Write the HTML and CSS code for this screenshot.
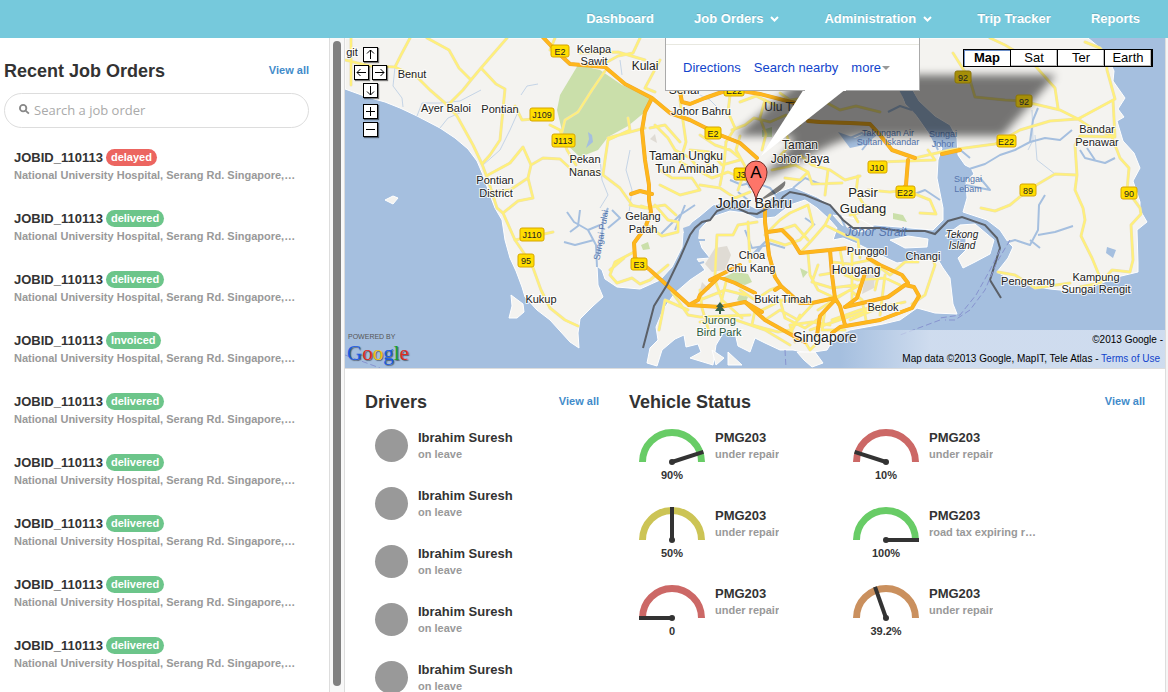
FILE: index.html
```html
<!DOCTYPE html>
<html lang="en">
<head>
<meta charset="utf-8">
<meta name="viewport" content="width=device-width, initial-scale=1">
<title>Dashboard</title>
<link rel="stylesheet" href="styles.css">
</head>
<body>
<header class="topbar">
  <nav class="nav" aria-label="Main">
    <a href="#">Dashboard</a>
    <a href="#" class="has-menu">Job Orders <svg class="chevron" viewBox="0 0 9 6" aria-hidden="true"><path d="M1 1l3.500 3.500L8 1"/></svg></a>
    <a href="#" class="has-menu">Administration <svg class="chevron" viewBox="0 0 9 6" aria-hidden="true"><path d="M1 1l3.500 3.500L8 1"/></svg></a>
    <a href="#">Trip Tracker</a>
    <a href="#">Reports</a>
  </nav>
</header>

<div class="shell">
  <aside class="sidebar">
    <div class="section-head">
      <h2>Recent Job Orders</h2>
      <a href="#">View all</a>
    </div>
    <label class="search">
      <svg viewBox="0 0 12 12" aria-hidden="true"><circle cx="4.500" cy="4.500" r="3.500"/><path d="M7.200 7.200l3.600 3.300"/></svg>
      <input type="text" placeholder="Search a job order" aria-label="Search a job order">
    </label>
    <ul class="jobs">
      <li><h3>JOBID_110113 <span class="badge delayed">delayed</span></h3><p>National University Hospital, Serang Rd. Singapore,…</p></li>
      <li><h3>JOBID_110113 <span class="badge">delivered</span></h3><p>National University Hospital, Serang Rd. Singapore,…</p></li>
      <li><h3>JOBID_110113 <span class="badge">delivered</span></h3><p>National University Hospital, Serang Rd. Singapore,…</p></li>
      <li><h3>JOBID_110113 <span class="badge">Invoiced</span></h3><p>National University Hospital, Serang Rd. Singapore,…</p></li>
      <li><h3>JOBID_110113 <span class="badge">delivered</span></h3><p>National University Hospital, Serang Rd. Singapore,…</p></li>
      <li><h3>JOBID_110113 <span class="badge">delivered</span></h3><p>National University Hospital, Serang Rd. Singapore,…</p></li>
      <li><h3>JOBID_110113 <span class="badge">delivered</span></h3><p>National University Hospital, Serang Rd. Singapore,…</p></li>
      <li><h3>JOBID_110113 <span class="badge">delivered</span></h3><p>National University Hospital, Serang Rd. Singapore,…</p></li>
      <li><h3>JOBID_110113 <span class="badge">delivered</span></h3><p>National University Hospital, Serang Rd. Singapore,…</p></li>
    </ul>
  </aside>
  <div class="scroll-track" aria-hidden="true"><div class="scroll-thumb"></div></div>

  <main class="main">
    <section class="map" aria-label="Map">
      <svg class="map-canvas" viewBox="345 38 820 330" preserveAspectRatio="xMidYMid slice">
        <defs>
          <filter id="soft" x="-20%" y="-40%" width="140%" height="180%"><feGaussianBlur stdDeviation="4"/></filter>
          <g id="minor">
            <path d="M345 60L370 66L395 67L401 55L410 38M351 38V85M395 67L418 78L430 90L445 103L457 116L473 145L482 164L488 180L497 208L503 213L515 240L532 265L541 290L550 308L565 320L578 326"/>
            <path d="M427 38L449 50L459 68L471 80L481 68L507 38M471 80L463 90L450 103M481 68L496 84L505 89L500 140L490 155L482 164M515 106L522 120L545 118"/>
            <path d="M488 175L510 163L523 147L531 165L528 178L510 190L490 192M531 165L543 158L560 159L572 170L600 172M528 178L533 198L518 201L503 213M515 240L535 236L553 232"/>
            <path d="M550 125L560 130L567 150L576 165M605 71L592 90L578 112L565 120L562 132M600 66L618 56L633 53L640 38M580 53L618 52L645 60M660 60L645 88L655 92M605 160L608 140L630 130L628 118M605 160L603 175L620 188L632 205M608 138L645 128"/>
            <path d="M550 50L555 38M686 85L680 100L686 142L680 162L695 170M730 95L728 112L735 128L726 142M655 125L668 138L675 150L690 158L700 170M650 128L665 125L680 142M660 185L680 195L700 190L692 178L672 178L660 170M655 205L668 220L678 222L678 232L662 236L648 226M630 205L645 208L665 205L676 215"/>
            <path d="M740 102L756 96L775 105M732 130L745 125L754 118L770 122L786 115L800 125M780 93L790 100L805 98M700 135L715 145L730 150L740 158M690 150L710 152L722 165L740 160M693 168L712 178L728 172L746 180M710 155L706 172M726 142L724 165L720 185M740 136L736 150L746 168L738 190M700 185L720 188L735 198L750 192M765 100L760 118L766 134L762 150M785 130L790 145L778 158L790 164M772 170L795 165L808 172L800 180L785 178M800 155L812 165L830 170L845 180L860 176M808 172L812 184L842 183M828 170L825 195M818 98L840 110L856 106L880 112"/>
            <path d="M858 176L856 192L864 205L876 210M868 190L890 192L905 190L930 200L936 214L920 213M850 215L870 210L885 214M850 208L858 222"/>
            <path d="M880 162L935 160L928 150M953 53L970 80L975 97L1005 100L1022 101L1060 110L1078 119L1115 99L1107 70L1106 58M990 38L1005 45L1030 60L1055 88L1058 108M1085 42L1100 48L1108 58M1078 119L1090 127L1115 137L1113 100M915 158L950 150L995 144L1020 130L1050 121L1078 119"/>
            <path d="M1112 137L1120 158L1129 168L1127 190L1140 208L1141 214L1131 225L1133 260L1130 272L1112 270L1100 283L1080 287M1113 137L1080 136L1075 145L1077 175L1075 190L1083 208L1085 220L1081 236L1092 258L1099 275M1077 175L1055 174L1028 190L1010 205L995 211L981 208M998 272L1015 275L1035 288L1070 283"/>
            <path d="M634 252L615 262L610 275L617 283L632 278L640 284L650 280L668 265M624 258L610 270M651 209L641 206M688 310L665 300L659 330M672 292L688 315L700 317L750 315M715 276L717 235L733 235L738 225L757 222M748 222L750 262"/>
            <path d="M765 235L780 220L790 213L808 205L813 225L800 240L785 245L770 240M780 230L795 225L808 240M800 253L812 240L825 225L845 235L858 240L860 258M808 253L810 275L818 290L835 298M832 262L850 264L870 260L890 275L905 262L918 262M840 250L845 275L858 280L885 278L900 285M852 252L852 300M818 265L812 282L832 288L855 285M880 268L875 290M818 310L850 290L862 300M850 320L878 308L905 302M835 298L860 285M885 275L880 315M862 300L866 320M912 304L925 295L935 265L932 258M820 275L838 272M825 225L830 215"/>
            <path d="M700 290L702 308L710 335M715 280L722 300L742 318M726 282L720 307M740 290L755 300L770 290L781 286M700 300L725 290L745 295M745 302L758 312L782 300L800 303M755 310L752 325L778 332L790 330M765 320L780 310L798 320L812 305M780 300L785 318L805 328L820 318M790 334L800 315M795 342L790 325L812 322L830 325M805 342L810 350L820 340M825 310L822 330L845 330M810 330L845 318L870 310M832 320L860 310L885 305M700 322L730 318L765 330L790 345"/>
          </g>
          <g id="major">
            <path d="M540 34L555 50L570 64L605 67L625 84L652 98L670 113L690 120L720 135L740 143L757 158M652 98L645 112L642 130L645 160L649 185L649 200L651 212L645 228L634 243L635 258L650 270L670 288L689 305L720 307L745 302L762 312M631 194L640 191L652 194"/>
            <path d="M680 92L682 102L690 104L705 98L725 91M725 88L760 94L795 103M808 121L820 122L850 123L870 124L880 135L892 150L915 158M942 154L960 150M908 160L906 185L900 195"/>
            <path d="M765 205L765 222L769 255L775 277L781 286L800 303L812 303L835 298L840 306L845 325M768 232L782 230L792 240L800 253L830 250L832 275L835 298M830 250L848 248M845 307L888 297L905 285L914 287L919 296L912 308L880 320L840 327L832 333M868 258L880 265L902 275L908 283M866 270L857 298L845 307M835 300L820 316L817 335M775 290L781 286M689 305L698 300L700 295L719 277L735 283L755 293M745 302L765 320L790 334L805 342M710 280L740 265"/>
          </g>
        </defs>

        <rect x="345" y="38" width="820" height="330" fill="#a5bfdf"/>
        <g class="land">
          <path d="M345 38V89L367 97L385 102L400 108L417 116L440 128L455 138L468 149L477 161L483 175L490 195L495 208L502 220L505 240L510 258L516 271L522 287L525 297L537 310L550 320L570 342L579 348L578 333L580 319L593 306L603 297L598 285L597 266L602 270L605 279L617 287L640 289L660 280L672 267L682 247L683 233L692 222L700 216L713 205L730 200L745 203L757 209L767 202L778 192L793 187L805 192L817 197L830 205L840 216L853 228L875 225L910 228L933 230L943 220L943 208L937 178L938 160L942 148L927 131L913 111L905 104L900 88L910 85L918 100L935 116L950 125L957 138L958 155L965 165L971 168L974 174L966 181L967 198L963 212L987 220L1000 230L1008 242L1013 247L1008 258L997 272L1012 280L1027 285L1050 289L1080 292L1097 285L1117 277L1138 272V263L1137 230L1147 222L1140 210V202L1133 181L1140 168L1134 153L1123 141L1117 121L1124 117L1118 109L1125 98L1113 81L1114 71L1105 52L1088 38Z"/>
          <path d="M712 217L730 211L745 213L757 219L775 217L790 205L805 200L817 208L830 220L837 228L833 240L843 238L860 245L880 255L897 263L917 260L937 258L943 268L950 278L953 304L957 314L935 313L917 308L900 320L883 324L850 330L835 337L827 350L807 353L793 350L780 350L765 343L755 338L750 352L738 346L735 333L725 330L716 345L713 365L690 358L701 352L698 344L686 347L684 335L675 339L662 350L657 366L647 363L650 348L658 340L656 327L663 310L675 293L690 280L705 270L697 259L710 258L702 248L697 233L704 225Z"/>
          <path d="M511 295L523 304L524 312L517 318H509L512 306ZM385 200L393 196L398 198L393 204ZM797 352L815 352L823 363L812 367L804 360ZM712 350L724 358L716 365ZM728 352L742 365H728ZM963 268L958 258L966 250L966 235L945 236L960 225L975 224L994 240L990 254L975 262ZM890 240L908 236L928 239L927 247L905 248ZM833 215L862 220L875 228L860 232L842 225Z"/>
        </g>
        <g class="green">
          <path d="M578 65L600 70L622 85L652 98L645 112L628 126L608 137L598 150L580 157L565 143L557 110L560 95Z"/>
          <path d="M641 245L648 242L650 249L643 250ZM722 278L735 272L748 274L752 282L745 285L733 282ZM762 130L772 127V137H762ZM800 268L808 272L803 278ZM740 293L748 297L745 304L737 300ZM893 213L903 215L907 222L893 219Z"/>
        </g>
        <path class="built" d="M715 248L727 246L731 255L725 270L712 272L705 264ZM866 270L875 273L874 288L862 294ZM650 139L655 134L657 143ZM702 282L710 290L700 290Z"/>
        <g class="creek">
          <path d="M395 67L393 86L402 98L403 107M417 116L422 103L440 103L460 101L481 90M440 128L448 118L462 112M483 165L500 150L510 130L518 112M521 95L527 86L538 84M600 158L602 180L608 195L600 208M630 150L626 170L632 190L628 220M620 60L622 75M690 90L710 100L725 115M1035 135L1037 160L1055 174M1032 110L1033 140L1028 150"/>
        </g>
        <g class="river">
          <path d="M597 267L596 245L588 230L574 222L567 212M598 255L602 235L603 220L608 208M588 230L600 225M594 240L575 245L564 242M612 210L620 218L608 228M570 232L578 226L580 210M660 235L670 225L680 215L695 205M675 230L685 205M780 200L770 188L754 182L742 185L730 180M750 188L745 178M748 200L738 192M793 188L805 178L820 184M745 230L752 248L770 245M750 257L765 242L785 248M765 242L758 252M690 240L705 240M693 265L704 262M805 218L815 225M780 286L790 292M840 215L850 238L870 245L878 255M905 100L920 110L938 150M850 138L862 133L870 140L862 150M888 112L900 106L912 110M958 148L970 158M940 200L925 190L912 195"/>
          <path d="M966 170L985 164L1000 155L1015 150L1030 142L1045 138L1060 140L1072 130M1030 142L1033 120L1038 108M966 185L990 190L980 178M998 245L1015 240L1030 245L1038 230L1039 205L1045 195M1038 235L1055 232L1073 226M1030 240L1040 248M1080 150L1085 158L1105 163L1115 158M1087 148L1095 160"/>
        </g>
        <path class="lake" d="M588 132L592 135L593 142L586 148L589 139ZM898 88L912 90L925 112L945 135L936 145L921 120L907 105ZM1107 247L1116 250L1113 258L1106 253ZM838 132L855 138L868 132L876 136L864 145L850 148ZM683 228L700 222L698 240L686 243Z"/>
        <use href="#minor" class="minor-edge"/><use href="#minor" class="minor-fill"/>
        <use href="#major" class="major-edge"/><use href="#major" class="major-fill"/>
        <path class="border-line" d="M643 348L654 306L667 285L680 258L690 235L695 228L702 222L710 220L717 211L725 208H737L748 213L757 214L768 208L778 204L783 197L790 192L805 195L830 205L843 220L853 228L880 228L900 231L925 231L935 234L948 221L962 217L985 225L997 238L1000 248L990 280L1001 298"/>
        <path class="ferry" d="M345 355L380 368M1010 240L997 262L985 290L970 310L955 320L945 320M1000 250L990 270L976 295L960 315L940 318M940 320L900 335M785 350L786 368"/>

        <g class="water-labels">
          <text x="888" y="136">Takungan Air</text><text x="888" y="145">Sultan Iskandar</text>
          <text x="943" y="137">Sungai</text><text x="943" y="147">Johor</text>
          <text x="968" y="182">Sungai</text><text x="968" y="192">Lebam</text>
          <text x="601" y="238" transform="rotate(-80 601 235)">Sungai Pulai</text>
          <text x="876" y="236" class="strait">Johor Strait</text>
        </g>

        <path d="M806 75H1056L1002 136H862C820 142 800 168 757 180C780 160 800 140 790 136H735Z" opacity=".52" filter="url(#soft)"/>
        <path d="M757 202L785 181C788 190 770 196 757 202Z" opacity=".5"/>

        <g class="shields">
          <g><rect x="551" y="45" width="18" height="12"/><text x="560" y="55">E2</text></g>
          <g><rect x="530" y="108" width="24" height="13"/><text x="542" y="118">J109</text></g>
          <g><rect x="552" y="134" width="23" height="13"/><text x="563" y="144">J113</text></g>
          <g><rect x="705" y="127" width="16" height="12"/><text x="713" y="137">E2</text></g>
          <g><rect x="724" y="84" width="20" height="12"/><text x="734" y="94">E22</text></g>
          <g><rect x="734" y="168" width="20" height="12"/><text x="741" y="178">J3</text></g>
          <g><rect x="868" y="161" width="19" height="12"/><text x="877" y="171">J10</text></g>
          <g><rect x="896" y="186" width="19" height="12"/><text x="905" y="196">E22</text></g>
          <g><rect x="520" y="228" width="24" height="13"/><text x="532" y="238">J110</text></g>
          <g><rect x="518" y="254" width="16" height="13"/><text x="526" y="264">95</text></g>
          <g><rect x="631" y="258" width="16" height="12"/><text x="639" y="268">E3</text></g>
          <g class="shade"><rect x="955" y="71" width="16" height="12"/><text x="963" y="81">92</text></g>
          <g class="shade"><rect x="1016" y="95" width="16" height="12"/><text x="1024" y="105">92</text></g>
          <g><rect x="997" y="135" width="19" height="12"/><text x="1006" y="145">E22</text></g>
          <g><rect x="1020" y="184" width="16" height="12"/><text x="1028" y="194">89</text></g>
          <g><rect x="1121" y="187" width="16" height="12"/><text x="1129" y="197">90</text></g>
        </g>

        <g class="labels">
          <text x="352" y="56">git</text><text x="412" y="78">Benut</text>
          <text x="446" y="112">Ayer Baloi</text><text x="500" y="113">Pontian</text>
          <text x="495" y="184">Pontian</text><text x="496" y="197">District</text>
          <text x="594" y="53">Kelapa</text><text x="594" y="65">Sawit</text>
          <text x="645" y="70" class="town">Kulai</text><text x="684" y="94" class="town">Senai</text>
          <text x="701" y="115">Johor Bahru</text>
          <text x="585" y="163">Pekan</text><text x="585" y="176">Nanas</text>
          <text x="686" y="160" class="town">Taman Ungku</text><text x="687" y="173" class="town">Tun Aminah</text>
          <g class="shaded"><text x="790" y="111" class="town">Ulu Tiram</text></g>
          <text x="800" y="149" class="town">Taman</text><text x="800" y="163" class="town">Johor Jaya</text>
          <text x="754" y="208" class="city">Johor Bahru</text>
          <text x="863" y="197" class="big">Pasir</text><text x="863" y="213" class="big">Gudang</text>
          <text x="643" y="220">Gelang</text><text x="643" y="233">Patah</text>
          <text x="541" y="303">Kukup</text>
          <text x="752" y="259">Choa</text><text x="751" y="272">Chu Kang</text>
          <text x="867" y="255">Punggol</text><text x="923" y="260">Changi</text>
          <text x="856" y="274" class="town">Hougang</text>
          <text x="783" y="303">Bukit Timah</text><text x="883" y="311">Bedok</text>
          <text x="825" y="342" class="city">Singapore</text>
          <text x="719" y="324" class="park">Jurong</text><text x="719" y="336" class="park">Bird Park</text>
          <text x="1097" y="133">Bandar</text><text x="1097" y="146">Penawar</text>
          <text x="1028" y="285">Pengerang</text>
          <text x="1096" y="281">Kampung</text><text x="1096" y="293">Sungai Rengit</text>
          <text x="962" y="238" class="isle">Tekong</text><text x="962" y="249" class="isle">Island</text>
        </g>
        <path d="M720 302L724 307H722L725 311H721V314H719V311H715L718 307H716Z" fill="#38624a"/>

        <path class="bubble-tail" d="M804 89L761 156L846 89Z"/>
        <path class="marker" d="M756 202C756 190 745 184 745 172A11 11 0 0 1 767 172C767 184 756 190 756 202Z"/>
        <text class="marker-letter" x="756" y="178">A</text>
      </svg>

      <div class="info-window">
        <a href="#">Directions</a><a href="#">Search nearby</a><a href="#" class="more">more</a>
      </div>

      <div class="pan">
        <button type="button" class="n" aria-label="Pan up"><svg viewBox="0 0 13 13"><path d="M6.500 11V2M3 5.500L6.500 2L10 5.500"/></svg></button>
        <button type="button" class="w" aria-label="Pan left"><svg viewBox="0 0 13 13"><path d="M11 6.500H2M5.500 3L2 6.500L5.500 10"/></svg></button>
        <button type="button" class="e" aria-label="Pan right"><svg viewBox="0 0 13 13"><path d="M2 6.500H11M7.500 3L11 6.500L7.500 10"/></svg></button>
        <button type="button" class="s" aria-label="Pan down"><svg viewBox="0 0 13 13"><path d="M6.500 2V11M3 7.500L6.500 11L10 7.500"/></svg></button>
        <button type="button" class="in" aria-label="Zoom in"><svg viewBox="0 0 13 13"><path d="M2 6.500H11M6.500 2V11"/></svg></button>
        <button type="button" class="out" aria-label="Zoom out"><svg viewBox="0 0 13 13"><path d="M2 6.500H11"/></svg></button>
      </div>

      <div class="map-types">
        <button type="button" class="active">Map</button><button type="button">Sat</button><button type="button">Ter</button><button type="button">Earth</button>
      </div>

      <div class="google">
        <span class="powered">POWERED BY</span>
        <span class="wordmark"><span class="b">G</span><span class="r">o</span><span class="y">o</span><span class="b">g</span><span class="g">l</span><span class="r">e</span></span>
      </div>
      <div class="credits"><p>©2013 Google -</p><p>Map data ©2013 Google, MapIT, Tele Atlas - <a href="#">Terms of Use</a></p></div>
    </section>

    <div class="panels">
      <section class="drivers">
        <div class="section-head"><h2>Drivers</h2><a href="#">View all</a></div>
        <ul>
          <li><span class="avatar"></span><div><h3>Ibrahim Suresh</h3><p>on leave</p></div></li>
          <li><span class="avatar"></span><div><h3>Ibrahim Suresh</h3><p>on leave</p></div></li>
          <li><span class="avatar"></span><div><h3>Ibrahim Suresh</h3><p>on leave</p></div></li>
          <li><span class="avatar"></span><div><h3>Ibrahim Suresh</h3><p>on leave</p></div></li>
          <li><span class="avatar"></span><div><h3>Ibrahim Suresh</h3><p>on leave</p></div></li>
        </ul>
      </section>
      <section class="vehicles">
        <div class="section-head"><h2>Vehicle Status</h2><a href="#">View all</a></div>
        <ul>
          <li><figure class="gauge green-arc"><svg viewBox="0 0 66 36"><path class="arc" d="M3.500 33A29.500 29.500 0 0 1 62.500 33"/><path class="needle" d="M33 33L64.400 22.800"/><circle cx="33" cy="33" r="3"/></svg><figcaption>90%</figcaption></figure><div><h3>PMG203</h3><p>under repair</p></div></li>
          <li><figure class="gauge red-arc"><svg viewBox="0 0 66 36"><path class="arc" d="M3.500 33A29.500 29.500 0 0 1 62.500 33"/><path class="needle" d="M33 33L1.600 22.800"/><circle cx="33" cy="33" r="3"/></svg><figcaption>10%</figcaption></figure><div><h3>PMG203</h3><p>under repair</p></div></li>
          <li><figure class="gauge yellow-arc"><svg viewBox="0 0 66 36"><path class="arc" d="M3.500 33A29.500 29.500 0 0 1 62.500 33"/><path class="needle" d="M33 33V0"/><circle cx="33" cy="33" r="3"/></svg><figcaption>50%</figcaption></figure><div><h3>PMG203</h3><p>under repair</p></div></li>
          <li><figure class="gauge green-arc"><svg viewBox="0 0 66 36"><path class="arc" d="M3.500 33A29.500 29.500 0 0 1 62.500 33"/><path class="needle" d="M33 33H66"/><circle cx="33" cy="33" r="3"/></svg><figcaption>100%</figcaption></figure><div><h3>PMG203</h3><p>road tax expiring r…</p></div></li>
          <li><figure class="gauge red-arc"><svg viewBox="0 0 66 36"><path class="arc" d="M3.500 33A29.500 29.500 0 0 1 62.500 33"/><path class="needle" d="M33 33H0"/><circle cx="33" cy="33" r="3"/></svg><figcaption>0</figcaption></figure><div><h3>PMG203</h3><p>under repair</p></div></li>
          <li><figure class="gauge orange-arc"><svg viewBox="0 0 66 36"><path class="arc" d="M3.500 33A29.500 29.500 0 0 1 62.500 33"/><path class="needle" d="M33 33L22 1.900"/><circle cx="33" cy="33" r="3"/></svg><figcaption>39.2%</figcaption></figure><div><h3>PMG203</h3><p>under repair</p></div></li>
        </ul>
      </section>
    </div>
  </main>
</div>
</body>
</html>
```
FILE: styles.css
```css
* { box-sizing: border-box; }
body { margin: 0; height: 100vh; display: flex; flex-direction: column; overflow: hidden; background: #fff; color: #333; font-family: "Liberation Sans", Arial, sans-serif; font-size: 11px; font-weight: bold; }
h2, h3, p, ul, figure { margin: 0; padding: 0; }
ul { list-style: none; }
a { color: #428bca; text-decoration: none; }
h2 { font-size: 18px; line-height: 24px; }
h3 { font-size: 13px; line-height: 17px; }
p { color: #999; font-size: 11px; line-height: 16px; }

.topbar { flex: none; background: #76c9dc; }
.nav { display: flex; justify-content: flex-end; gap: 40px; padding: 0 28px; }
.nav a { color: #fff; font-size: 13px; line-height: 38px; text-shadow: 0 -1px 0 rgba(0, 0, 0, .15); }
.has-menu { display: flex; align-items: center; gap: 7px; padding-right: 5px; }
.chevron { width: 9px; height: 6px; fill: none; stroke: #fff; stroke-width: 2; }

.shell { flex: 1; min-height: 0; display: flex; }
.sidebar { flex: none; width: 329px; padding: 20px 20px 0 4px; overflow-y: auto; scrollbar-width: none; }
.section-head { display: flex; align-items: center; justify-content: space-between; }
.section-head h2 { padding-top: 2px; line-height: 22px; }
.search { display: flex; align-items: center; gap: 4px; height: 35px; margin-top: 11px; padding: 0 14px 2px; border: 1px solid #ddd; border-radius: 18px; }
.search svg { flex: none; width: 11px; height: 11px; fill: none; stroke: #888; stroke-width: 2; }
.search input { flex: 1; min-width: 0; padding: 0; border: 0; outline: 0; background: none; color: #333; font: 13px "Open Sans", "Noto Sans", sans-serif; }
.search input::placeholder { color: #aaa; opacity: 1; }
.jobs { display: grid; grid-template-columns: minmax(0, 1fr); gap: 24px; padding: 19px 10px; }
.jobs h3 { display: flex; align-items: center; gap: 3px; height: 20px; }
.jobs p { line-height: 17px; overflow: hidden; text-overflow: ellipsis; white-space: nowrap; }
.badge { padding: 0 5px; border-radius: 9px; background: #6cc58a; color: #fff; font-size: 11px; line-height: 17px; }
.badge.delayed { background: #ec6560; }

.scroll-track { flex: none; width: 16px; padding: 3px 3px 6px; border-left: 1px solid #ddd; border-right: 1px solid #ddd; background: #f8f8f8; }
.scroll-thumb { width: 8px; height: 100%; border-radius: 4px; background: #808080; }

.main { flex: 1; min-width: 0; margin-right: 3px; overflow-y: auto; scrollbar-width: none; box-shadow: 1px 0 0 #ddd, 3px 0 0 #f5f5f5; }
.map { position: relative; height: 331px; overflow: hidden; border-bottom: 1px solid #ddd; font-weight: normal; }
.map-canvas { display: block; width: 100%; height: 100%; font-family: "Liberation Sans", Arial, sans-serif; }
.land path { fill: #f4f3f0; stroke: #fff; stroke-width: 1; }
.green path { fill: #cadfaa; }
.built { fill: #dfdbd4; }
.creek path, .river path { fill: none; stroke: #a5bfdf; stroke-linejoin: round; }
.creek path { stroke-width: 1; opacity: .6; }
.river path { stroke-width: 2; }
.lake { fill: #a5bfdf; }
.minor-edge, .minor-fill, .major-edge, .major-fill { fill: none; stroke-linejoin: round; stroke-linecap: round; }
.minor-edge { stroke: #ebe0b4; stroke-width: 3; }
.minor-fill { stroke: #fff07a; stroke-width: 2; }
.major-edge { stroke: #eda92c; stroke-width: 4; }
.major-fill { stroke: #ffb71c; stroke-width: 3; }
.border-line { fill: none; stroke: #5b6068; stroke-width: 2; }
.ferry { fill: none; stroke: #8793cf; stroke-width: 1; stroke-dasharray: 6 3; }
.shields rect { fill: #fd0; stroke: #d6a500; rx: 2px; }
.shields .shade rect { fill: #a58e08; stroke: #8a7408; }
.shields text { font-size: 9px; text-anchor: middle; fill: #222; }
.labels text { font-size: 11px; text-anchor: middle; fill: #222; stroke: #fff; stroke-width: 2px; stroke-opacity: .8; paint-order: stroke; }
.labels .shaded text { stroke: none; }
.labels .town { font-size: 12px; }
.labels .big { font-size: 13px; }
.labels .city { font-size: 14px; }
.labels .park { fill: #2c5a3c; }
.labels .isle { font-size: 10px; font-style: italic; }
.water-labels text { font-size: 9px; text-anchor: middle; fill: #5575ad; }
.water-labels .strait { font-size: 12px; font-style: italic; }
.bubble-tail { fill: #fff; }
.marker { fill: #fe7569; stroke: #6b2a26; stroke-width: 1; }
.marker-letter { font-size: 17px; text-anchor: middle; fill: #000; }

.info-window { position: absolute; top: 0; left: calc(50% - 90px); width: 255px; height: 53px; padding: 16px 17px 0; display: flex; gap: 13px; border: 1px solid #aaa; border-top: 0; background: linear-gradient(#e8e8e0, #e8e8e0) 0 6px / 100% 1px no-repeat #fff; font-size: 13px; line-height: 28px; white-space: nowrap; }
.info-window::after { content: ""; position: absolute; left: 139px; bottom: -1px; width: 41px; height: 1px; background: #fff; }
.info-window a { color: #1144cc; }
.more::after { content: ""; display: inline-block; margin-left: 1px; vertical-align: 2px; border: 4px solid transparent; border-top-color: #999; border-bottom: 0; }

.pan { position: absolute; top: 9px; left: 9px; display: grid; grid-template: repeat(5, 15px) / repeat(4, 7px); gap: 3px 2px; }
.pan button { width: 15px; height: 15px; padding: 0; border: 1px solid #000; background: #fff; box-shadow: 1px 1px 1px rgba(0, 0, 0, .5); }
.pan svg { display: block; width: 13px; height: 13px; fill: none; stroke: #000; stroke-width: 1; }
.n, .s, .in, .out { grid-column: 2 / span 2; }
.n { grid-row: 1; }
.w { grid-area: 2 / 1 / auto / span 2; }
.e { grid-area: 2 / 3 / auto / span 2; }
.s { grid-row: 3; }
.in { grid-row: 4; margin-top: 3px; }
.out { grid-row: 5; margin-top: 3px; }

.map-types { position: absolute; top: 11px; right: 12px; display: flex; border: 1px solid #000; background: #000; }
.map-types button { width: 47px; height: 16px; padding: 0; border: 0; border-right: 1px solid #000; background: #fff; box-shadow: inset -1px -1px 0 #bbb; color: #000; font: 13px/16px "Liberation Sans", Arial, sans-serif; }
.map-types .active { box-shadow: inset 1px 1px 0 #6c8fc8; font-weight: bold; }

.google { position: absolute; left: 2px; bottom: 4px; display: flex; flex-direction: column; }
.powered { padding-left: 1px; color: #555; font-size: 7px; line-height: 10px; }
.wordmark { font: 22px/22px "Liberation Serif", "Times New Roman", serif; text-shadow: 1px 1px 1px rgba(0, 0, 0, .5); }
.wordmark span { font-size: 21px; }
.b { color: #1a5ae0; }
.r { color: #dd2c1e; }
.y { color: #efc010; }
.g { color: #1ba02c; }
.credits { position: absolute; right: 0; bottom: 0; padding: 0 5px 0 62px; background: linear-gradient(90deg, rgba(211, 223, 240, 0), rgba(211, 223, 240, .9) 90px); text-align: right; }
.credits p { color: #000; font-size: 10px; line-height: 19px; }
.credits p:first-child { margin-right: -3px; }
.credits a { color: #1144cc; }

.panels { display: flex; gap: 30px; padding: 20px; }
.drivers { flex: 0 0 30%; }
.vehicles { flex: 1; min-width: 0; }
.panels ul { padding: 16px 10px 0; }
.drivers ul { display: grid; gap: 25px; }
.drivers li { display: flex; gap: 10px; }
.avatar { flex: none; width: 33px; height: 33px; border-radius: 50%; background: #999; }
.vehicles ul { display: grid; grid-template-columns: repeat(auto-fill, 214px); gap: 23px 0; padding-right: 0; }
.vehicles li { display: flex; gap: 10px; }
.vehicles li div { min-width: 0; padding-right: 20px; }
.vehicles p { overflow: hidden; text-overflow: ellipsis; white-space: nowrap; }
.gauge { flex: none; width: 66px; text-align: center; }
.gauge svg { display: block; width: 66px; height: 36px; fill: #333; }
.gauge figcaption { padding-top: 2px; font-size: 11px; line-height: 17px; }
.arc { fill: none; stroke-width: 7; }
.needle { stroke: #333; stroke-width: 4; }
.green-arc .arc { stroke: #68cc66; }
.red-arc .arc { stroke: #cc6866; }
.yellow-arc .arc { stroke: #ccc455; }
.orange-arc .arc { stroke: #ca905e; }
```
